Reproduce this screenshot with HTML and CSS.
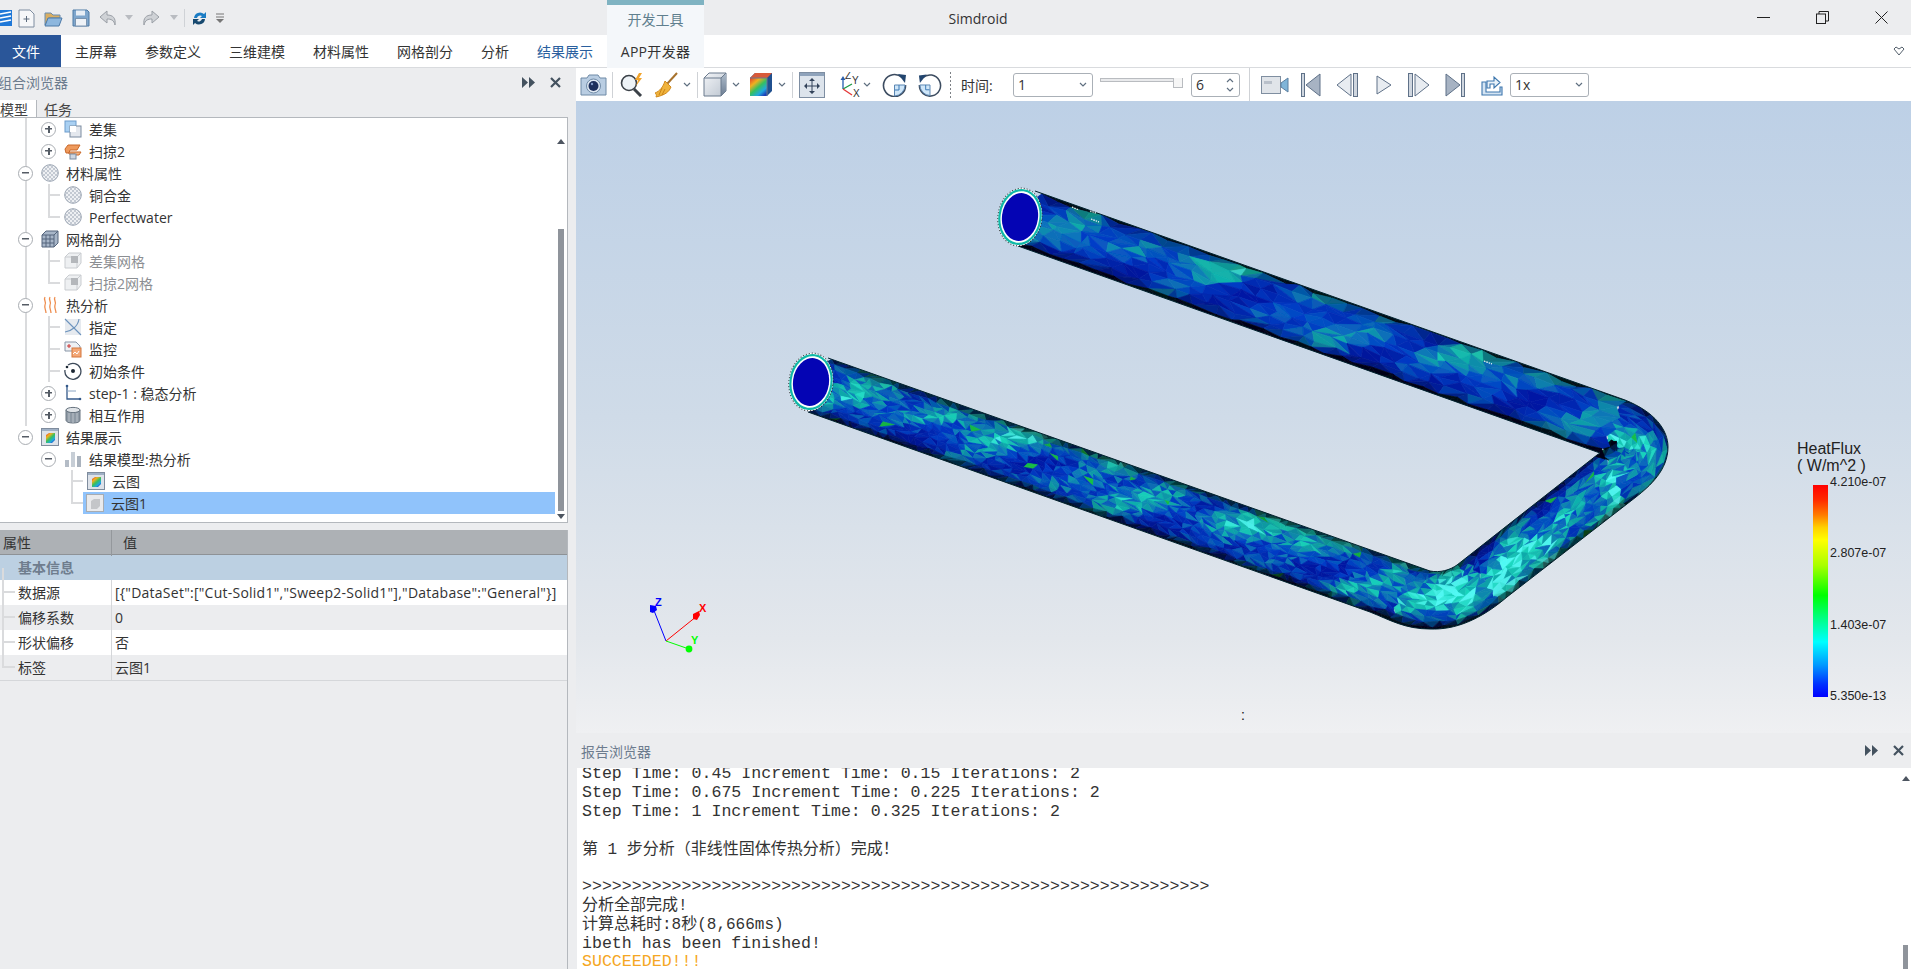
FILE: index.html
```html
<!DOCTYPE html>
<html lang="zh">
<head>
<meta charset="utf-8">
<title>Simdroid</title>
<link rel="stylesheet" href="styles.css">
</head>
<body>
<svg class="defs" width="0" height="0">
  <defs>
    <pattern id="chk" width="4" height="4" patternUnits="userSpaceOnUse"><rect width="4" height="4" fill="#eef0f3"/><rect width="2" height="2" fill="#c3c9d2"/><rect x="2" y="2" width="2" height="2" fill="#c3c9d2"/></pattern>
    <linearGradient id="rainbow" x1="0" y1="0" x2="0.8" y2="1"><stop offset="0" stop-color="#e23a2a"/><stop offset=".3" stop-color="#f0b020"/><stop offset=".55" stop-color="#35c060"/><stop offset=".8" stop-color="#20a8e0"/><stop offset="1" stop-color="#1c3fb8"/></linearGradient>
    <linearGradient id="steel" x1="0" y1="0" x2="1" y2="1"><stop offset="0" stop-color="#f2f4f7"/><stop offset="1" stop-color="#bcc5d0"/></linearGradient>
    <linearGradient id="sideg" x1="0" y1="0" x2="0" y2="1"><stop offset="0" stop-color="#aebccb"/><stop offset="1" stop-color="#6d7e93"/></linearGradient>
    <filter id="soften" x="-2%" y="-2%" width="104%" height="104%"><feGaussianBlur stdDeviation="0.6"/></filter>
    <symbol id="i-mat" viewBox="0 0 18 18"><circle cx="9" cy="9" r="8.3" fill="url(#chk)" stroke="#9aa4b2"/></symbol>
    <symbol id="i-cut" viewBox="0 0 18 18"><rect x="1" y="1" width="11" height="11" fill="#a9d0f2" stroke="#6c9ccc"/><rect x="6" y="6" width="11" height="11" fill="#e4e8ee" stroke="#7b8ba0"/><rect x="6" y="6" width="6" height="6" fill="#fff"/></symbol>
    <symbol id="i-sweep" viewBox="0 0 18 18"><path d="M4 3h12l-3 5h-7l-1 3h-3l-1-4z" fill="#ef9a5c" stroke="#c9692a"/><path d="M5 10h12l-2 3h-4v-1h-6z" fill="#f3b484" stroke="#c9692a"/><rect x="6" y="12" width="6" height="5" fill="#cdd6e2" stroke="#7b8ba0"/></symbol>
    <symbol id="i-mesh" viewBox="0 0 18 18"><path d="M1 5l4-4h12v12l-4 4H1z" fill="#a8b6c8" stroke="#54657c"/><path d="M1 5h12v12M13 5l4-4M5 5v12M9 5v12M1 9h12M1 13h12" fill="none" stroke="#54657c"/></symbol>
    <symbol id="i-gmesh" viewBox="0 0 18 18"><path d="M1 5l4-4h12v10l-4 5H1z" fill="#eef0f2" stroke="#c9ccd0"/><path d="M1 5h12v11M13 5l4-4" fill="none" stroke="#c9ccd0"/><path d="M7 4h7v7H7z" fill="#b4b7bb"/></symbol>
    <symbol id="i-heat" viewBox="0 0 18 18"><path d="M4 1c-2 3 2 5 0 8-1 3 1 5 1 8M9 1c-2 3 2 5 0 8-1 3 1 5 1 8M14 1c-2 3 2 5 0 8-1 3 1 5 1 8" fill="none" stroke="#ee8d4e" stroke-width="1.3"/></symbol>
    <symbol id="i-assign" viewBox="0 0 18 18"><rect x="1" y="1" width="16" height="16" fill="#e6eaef"/><path d="M1 1l16 16M1 14C8 13 14 8 15 1" fill="none" stroke="#6c93bd" stroke-width="1.1"/></symbol>
    <symbol id="i-monitor" viewBox="0 0 18 18"><path d="M1 2h11l4 4v5H1z" fill="#eef1f4" stroke="#8895a7"/><rect x="8" y="8" width="9" height="9" fill="#f3a878" stroke="#d4773c"/><path d="M9 14l2-2 2 2 2-3" fill="none" stroke="#fff"/><path d="M5 4v4M3 6h4" stroke="#c33" /></symbol>
    <symbol id="i-init" viewBox="0 0 18 18"><path d="M4 3a8 8 0 1 1-3 5" fill="none" stroke="#3d4a5a" stroke-width="1.3"/><circle cx="9" cy="9" r="2" fill="#1c2733"/><circle cx="3" cy="5" r="1.3" fill="#1c2733"/></symbol>
    <symbol id="i-step" viewBox="0 0 18 18"><path d="M3 2v13h14" fill="none" stroke="#34598a" stroke-width="1.3"/><path d="M3 7h9" stroke="#8aa4c2" stroke-width="1"/><circle cx="3" cy="2" r="1.3" fill="#34598a"/><circle cx="16" cy="15" r="1.3" fill="#34598a"/></symbol>
    <symbol id="i-cyl" viewBox="0 0 18 18"><path d="M2 4v10c0 2 3 3 7 3s7-1 7-3V4z" fill="#8f9aa5" stroke="#687480"/><ellipse cx="9" cy="4" rx="7" ry="2.6" fill="#dfe3e7" stroke="#687480"/><path d="M5 7v9M9 7v10M13 7v9" stroke="#bcc3cb"/></symbol>
    <symbol id="i-win" viewBox="0 0 18 18"><rect x=".5" y=".5" width="17" height="17" fill="#dde2e9" stroke="#7f8c9d"/><rect x="1" y="1" width="16" height="2" fill="#9fb0c5"/><path d="M5 7l3-2h6v7l-3 3H5z" fill="url(#rainbow)"/></symbol>
    <symbol id="i-gwin" viewBox="0 0 18 18"><rect x=".5" y=".5" width="17" height="17" fill="#e9eaec" stroke="#a8acb1"/><path d="M5 7l3-2h6v7l-3 3H5z" fill="#c4c6c9"/></symbol>
    <symbol id="i-bars" viewBox="0 0 18 18"><rect x="1" y="10" width="4" height="7" fill="#b4bcc6"/><rect x="7" y="2" width="4" height="15" fill="#c7ced6"/><rect x="13" y="6" width="4" height="11" fill="#aab3be"/></symbol>
    <symbol id="i-chev" viewBox="0 0 8 5"><path d="M1 1l3 3 3-3" fill="none" stroke="#5f6f80" stroke-width="1.2"/></symbol>
    <symbol id="i-rot" viewBox="0 0 25 25"><path d="M20 5.5A11 11 0 1 0 23.5 13" fill="none" stroke="#3c4c60" stroke-width="1.6"/><path d="M16 2l8 1-1 8z" fill="#22456e"/><path d="M12.5 13h10.5a11 11 0 0 1-10.5 11z" fill="#cfe6f8" stroke="#5a86b3"/><path d="M17 13v5h-4" fill="none" stroke="#3a78b5"/></symbol>
  </defs>
</svg>

<div class="app">
  <header class="titlebar">
    <div class="qa">
      <svg class="qa-logo" width="12" height="16" viewBox="0 0 12 16"><rect width="12" height="16" fill="#1f78d8"/><path d="M0 4l11-2M0 8l11-2M0 12l11-2" stroke="#fff" stroke-width="1.6"/></svg>
      <svg class="q6" width="17" height="19" viewBox="0 0 17 19"><path d="M1 1h11l4 4v13H1z" fill="#f6f7f9" stroke="#7f8da0"/><path d="M8.5 7v6M5.5 10h6" stroke="#5c6b7d"/></svg>
      <svg class="q9" width="19" height="17" viewBox="0 0 19 17"><path d="M1 3h6l2 2h7v3H5L1 15z" fill="#d9ae62" stroke="#6b8cae"/><path d="M4 8h14l-3 8H1z" fill="#8db7de" stroke="#4d7aa8"/></svg>
      <svg class="q9" width="18" height="18" viewBox="0 0 18 18"><path d="M1 1h14l2 2v14H1z" fill="#7fa6cc" stroke="#4f7aa5"/><rect x="4" y="1.5" width="9" height="5" fill="#e8eef5"/><rect x="3.5" y="9.5" width="11" height="7.5" fill="#eef2f7" stroke="#7a94b0"/></svg>
      <svg class="q8" width="20" height="18" viewBox="0 0 20 18"><path d="M9 2L2 8l7 6v-4c4 0 7 1 8 6 1-7-2-10-8-10z" fill="#cfd2d6" stroke="#9a9fa6"/></svg>
      <svg class="q6" width="10" height="6" viewBox="0 0 10 6"><path d="M1 0h8L5 5z" fill="#b9bcc1"/></svg>
      <svg class="q7" width="20" height="18" viewBox="0 0 20 18"><path d="M11 2l7 6-7 6v-4c-4 0-7 1-8 6-1-7 2-10 8-10z" fill="#cfd2d6" stroke="#9a9fa6"/></svg>
      <svg class="q8" width="10" height="6" viewBox="0 0 10 6"><path d="M1 0h8L5 5z" fill="#b9bcc1"/></svg>
      <i class="qa-sep"></i>
      <svg class="q7" width="15" height="19" viewBox="0 0 15 19"><path d="M2 9a6 6 0 0 1 10-4l2-2v6H8l2-2a3.5 3.5 0 0 0-5 2z" fill="#1b7cc4"/><path d="M13 10a6 6 0 0 1-10 4l-2 2v-6h6l-2 2a3.5 3.5 0 0 0 5-2z" fill="#17496f"/></svg>
      <svg class="q9" width="8" height="11" viewBox="0 0 8 11"><path d="M0 1h8M0 4h8" stroke="#777" stroke-width="1.2"/><path d="M0 6h8L4 10z" fill="#777"/></svg>
    </div>
    <div class="devtab">开发工具</div>
    <div class="apptitle">Simdroid</div>
    <div class="winbtns">
      <button class="winbtn"><svg width="13" height="13" viewBox="0 0 13 13"><path d="M0 6.5h13" stroke="#222" stroke-width="1"/></svg></button>
      <button class="winbtn"><svg width="13" height="13" viewBox="0 0 13 13"><rect x=".5" y="3" width="9" height="9.5" fill="none" stroke="#222"/><path d="M3 3V.5h9.5V10H10" fill="none" stroke="#222"/></svg></button>
      <button class="winbtn"><svg width="13" height="13" viewBox="0 0 13 13"><path d="M.5.5l12 12M12.5.5l-12 12" stroke="#222"/></svg></button>
    </div>
  </header>

  <nav class="ribbon">
    <div class="rtab file">文件</div>
    <div class="rtab">主屏幕</div>
    <div class="rtab">参数定义</div>
    <div class="rtab">三维建模</div>
    <div class="rtab">材料属性</div>
    <div class="rtab">网格剖分</div>
    <div class="rtab">分析</div>
    <div class="rtab active">结果展示</div>
    <div class="rtab app">APP开发器</div>
    <svg class="ribbon-fold" width="12" height="10" viewBox="0 0 12 10"><path d="M3 1L1 3l5 6 5-6-2-2-3 2z" fill="#fff" stroke="#55606c"/></svg>
  </nav>

  <div class="main">
    <aside class="left">
      <div class="panelhead tophead">
        <span class="panelname clip">组合浏览器</span>
        <span class="panelbtns">
          <svg width="13" height="11" viewBox="0 0 13 11"><path d="M0 0l6 5.5L0 11zM7 0l6 5.5L7 11z" fill="#44525f"/></svg>
          <svg class="closex" width="11" height="11" viewBox="0 0 11 11"><path d="M1 1l9 9M10 1l-9 9" stroke="#44525f" stroke-width="2.2"/></svg>
        </span>
      </div>
      <div class="ltabs"><span class="ltab on">模型</span><span class="ltab">任务</span></div>
      <div class="treebox">
        <div class="tree">
          <div class="row"><i class="cell v"></i><i class="cell"><b class="exp plus"></b></i><svg class="ic"><use href="#i-cut"/></svg><span class="lb">差集</span></div>
          <div class="row"><i class="cell v"></i><i class="cell"><b class="exp plus"></b></i><svg class="ic"><use href="#i-sweep"/></svg><span class="lb">扫掠2</span></div>
          <div class="row"><i class="cell v"><b class="exp minus"></b></i><svg class="ic"><use href="#i-mat"/></svg><span class="lb">材料属性</span></div>
          <div class="row"><i class="cell v"></i><i class="cell tee"></i><svg class="ic"><use href="#i-mat"/></svg><span class="lb">铜合金</span></div>
          <div class="row"><i class="cell v"></i><i class="cell end"></i><svg class="ic"><use href="#i-mat"/></svg><span class="lb">Perfectwater</span></div>
          <div class="row"><i class="cell v"><b class="exp minus"></b></i><svg class="ic"><use href="#i-mesh"/></svg><span class="lb">网格剖分</span></div>
          <div class="row"><i class="cell v"></i><i class="cell tee"></i><svg class="ic"><use href="#i-gmesh"/></svg><span class="lb dim">差集网格</span></div>
          <div class="row"><i class="cell v"></i><i class="cell end"></i><svg class="ic"><use href="#i-gmesh"/></svg><span class="lb dim">扫掠2网格</span></div>
          <div class="row"><i class="cell v"><b class="exp minus"></b></i><svg class="ic"><use href="#i-heat"/></svg><span class="lb">热分析</span></div>
          <div class="row"><i class="cell v"></i><i class="cell tee"></i><svg class="ic"><use href="#i-assign"/></svg><span class="lb">指定</span></div>
          <div class="row"><i class="cell v"></i><i class="cell tee"></i><svg class="ic"><use href="#i-monitor"/></svg><span class="lb">监控</span></div>
          <div class="row"><i class="cell v"></i><i class="cell tee"></i><svg class="ic"><use href="#i-init"/></svg><span class="lb">初始条件</span></div>
          <div class="row"><i class="cell v"></i><i class="cell"><b class="exp plus"></b></i><svg class="ic"><use href="#i-step"/></svg><span class="lb">step-1 : 稳态分析</span></div>
          <div class="row"><i class="cell v"></i><i class="cell"><b class="exp plus"></b></i><svg class="ic"><use href="#i-cyl"/></svg><span class="lb">相互作用</span></div>
          <div class="row"><i class="cell"><b class="exp minus"></b></i><svg class="ic"><use href="#i-win"/></svg><span class="lb">结果展示</span></div>
          <div class="row"><i class="cell"></i><i class="cell"><b class="exp minus"></b></i><svg class="ic"><use href="#i-bars"/></svg><span class="lb">结果模型:热分析</span></div>
          <div class="row"><i class="cell"></i><i class="cell"></i><i class="cell tee"></i><svg class="ic"><use href="#i-win"/></svg><span class="lb">云图</span></div>
          <div class="row"><i class="cell"></i><i class="cell"></i><i class="cell end"></i><span class="sel"><svg class="ic"><use href="#i-gwin"/></svg><span class="lb">云图1</span></span></div>
        </div>
        <div class="treescroll">
          <svg class="sarrow" width="8" height="5" viewBox="0 0 8 5"><path d="M4 0l4 5H0z" fill="#4d5560"/></svg>
          <div class="sthumb"></div>
          <svg width="8" height="5" viewBox="0 0 8 5"><path d="M4 5L0 0h8z" fill="#4d5560"/></svg>
        </div>
      </div>
      <section class="props">
        <div class="phead"><span class="pk">属性</span><span class="pv">值</span></div>
        <div class="pgroup">基本信息</div>
        <div class="prow"><span class="pk">数据源</span><span class="pv wide">[{"DataSet":["Cut-Solid1","Sweep2-Solid1"],"Database":"General"}]</span></div>
        <div class="prow alt"><span class="pk">偏移系数</span><span class="pv">0</span></div>
        <div class="prow"><span class="pk">形状偏移</span><span class="pv">否</span></div>
        <div class="prow alt last"><span class="pk">标签</span><span class="pv">云图1</span></div>
      </section>
    </aside>

    <div class="right">
      <div class="toolbar">
        <svg class="tool" width="27" height="23" viewBox="0 0 27 23"><path d="M1 5h6l2-3h9l2 3h6v17H1z" fill="#b9cde2" stroke="#6f8aa6"/><circle cx="13.5" cy="13" r="7" fill="#dfe8f2" stroke="#6f8aa6"/><circle cx="13.5" cy="13" r="5" fill="#1d2f5c"/><circle cx="12" cy="11" r="1.2" fill="#7f97c4"/></svg>
        <i class="tsep m5"></i>
        <svg class="tool m6" width="27" height="25" viewBox="0 0 27 25"><circle cx="10" cy="11" r="7.5" fill="#eef3f7" stroke="#3b4148" stroke-width="1.6"/><path d="M15 17l7 7" stroke="#3b4148" stroke-width="3"/><path d="M20 1l-4 7h3l-2 6 6-8h-3l3-5z" fill="#f2a42c"/></svg>
        <svg class="tool m8" width="24" height="26" viewBox="0 0 24 26"><path d="M23 1L13 12" stroke="#a7722d" stroke-width="2"/><path d="M11 9l6 6c-2 5-6 8-15 10 1-2 0-3-1-4 5-2 8-6 10-12z" fill="#f0b33c" stroke="#d18a1d"/><path d="M8 16l-3 7M11 17l-3 6" stroke="#c98417"/></svg>
        <svg class="chev m5" width="8" height="5"><use href="#i-chev"/></svg>
        <i class="tsep m6"></i>
        <svg class="tool m5" width="24" height="25" viewBox="0 0 24 25"><path d="M1 6l5-5h17v18l-5 5H1z" fill="url(#steel)" stroke="#6b7a8d"/><path d="M18 6v18l5-5V1z" fill="url(#sideg)"/><path d="M1 6h17v18M18 6l5-5" fill="none" stroke="#6b7a8d"/></svg>
        <svg class="chev m5" width="8" height="5"><use href="#i-chev"/></svg>
        <svg class="tool m9" width="24" height="25" viewBox="0 0 24 25"><path d="M1 6l5-5h17v18l-5 5H1z" fill="#20508f"/><rect x="1" y="6" width="17" height="18" fill="url(#rainbow)"/><path d="M1 6l5-5h17l-5 5z" fill="#d85a3a"/><path d="M1 6h17v18" fill="none" stroke="#6b7a8d"/></svg>
        <svg class="chev m5" width="8" height="5"><use href="#i-chev"/></svg>
        <i class="tsep m6"></i>
        <svg class="tool m6" width="26" height="26" viewBox="0 0 26 26"><rect x=".5" y=".5" width="25" height="25" fill="#dde4ec" stroke="#7e8ea2"/><rect x="1" y="1" width="24" height="3" fill="#8fa3bb"/><path d="M13 7v14M6 14h14" stroke="#33435a"/><path d="M13 6l3 3h-6zM13 22l-3-3h6zM5 14l3-3v6zM21 14l-3 3v-6z" fill="#33435a"/></svg>
        <svg class="tool m13" width="24" height="26" viewBox="0 0 24 26"><path d="M5 17V6" stroke="#3467b5" stroke-width="1.4"/><path d="M5 4l-2.5 4h5z" fill="#2c5ea8"/><path d="M5 17l9-5" stroke="#1f9a45" stroke-width="1.4"/><path d="M5 17l9 6" stroke="#e43838" stroke-width="1.4"/><text class="axt" x="7" y="7">Z</text><text class="axt" x="14" y="12">Y</text><text class="axt" x="15" y="25">X</text></svg>
        <svg class="chev m1" width="8" height="5"><use href="#i-chev"/></svg>
        <svg class="tool m11" width="25" height="25"><use href="#i-rot"/></svg>
        <svg class="tool m11 flip" width="24" height="25"><use href="#i-rot"/></svg>
        <i class="tdash m8"></i>
        <span class="tlabel m10">时间:</span>
        <div class="combo m20 w80"><span>1</span><svg class="chev" width="8" height="5"><use href="#i-chev"/></svg></div>
        <div class="slider m7"><i class="track"></i><i class="handle"></i></div>
        <div class="combo m8 w49"><span>6</span><span class="spin"><svg width="8" height="5" class="up"><use href="#i-chev"/></svg><svg width="8" height="5"><use href="#i-chev"/></svg></span></div>
        <i class="tsep tall m9"></i>
        <svg class="tool m11" width="28" height="18" viewBox="0 0 28 18"><rect x=".5" y=".5" width="19" height="17" fill="#e0e4e9" stroke="#7f8ea0"/><rect x="3" y="5" width="8" height="3" fill="#b9c0ca"/><path d="M20 7l7-5v14l-7-5z" fill="#7fb4d8" stroke="#5b7ea0"/></svg>
        <svg class="tool m12" width="20" height="24" viewBox="0 0 20 24"><rect x=".5" y=".5" width="3" height="23" fill="#cfd6df" stroke="#5f7188"/><path d="M19 1v22L5 12z" fill="#a7b3c3" stroke="#5f7188"/></svg>
        <svg class="tool m15" width="22" height="24" viewBox="0 0 22 24"><path d="M15 1v22L1 12z" fill="#e8ecf1" stroke="#5f7188"/><rect x="17.5" y=".5" width="4" height="23" fill="#cfd6df" stroke="#5f7188"/></svg>
        <svg class="tool m18" width="16" height="20" viewBox="0 0 16 20"><path d="M1 1v18l14-9z" fill="#e8ecf1" stroke="#5f7188"/></svg>
        <svg class="tool m16" width="22" height="24" viewBox="0 0 22 24"><rect x=".5" y=".5" width="4" height="23" fill="#cfd6df" stroke="#5f7188"/><path d="M7 1v22l14-11z" fill="#e8ecf1" stroke="#5f7188"/></svg>
        <svg class="tool m15" width="20" height="24" viewBox="0 0 20 24"><path d="M1 1v22l14-11z" fill="#a7b3c3" stroke="#5f7188"/><rect x="16.5" y=".5" width="3" height="23" fill="#cfd6df" stroke="#5f7188"/></svg>
        <svg class="tool m16" width="22" height="24" viewBox="0 0 22 24"><path d="M1 9h4v10h14v-5h2v8H1z" fill="#d4e4f3" stroke="#3c76ad" stroke-width="1.1"/><path d="M6 15V8h7V4l6 5.5-6 5.5v-4H9v4z" fill="#e8f1f9" stroke="#3c76ad" stroke-width="1.1"/></svg>
        <div class="combo m7 w79"><span>1x</span><svg class="chev" width="8" height="5"><use href="#i-chev"/></svg></div>
      </div>

      <div class="viewport">
        <svg class="scene" viewBox="576 101 1335 632" width="1335" height="632">
          <defs>
            <clipPath id="pipeclip"><path id="pipeoutline" d="M1035 191L1625 400C1655 412 1668 430 1668 447C1668 470 1650 486 1636 497L1507 597C1480 620 1455 630 1430 629C1405 629 1390 620 1370 612L808 412L800 382L828 358L1430 571C1440 573 1450 570 1457 565L1597 455L1600 453L1018 246L1010 218z"/></clipPath>
          </defs>
          <g clip-path="url(#pipeclip)"><g id="pipe-mesh" filter="url(#soften)"></g></g>
          <path class="pipe-edge" d="M1035 191L1625 400C1655 412 1668 430 1668 447C1668 470 1650 486 1636 497L1507 597C1480 620 1455 630 1430 629C1405 629 1390 620 1370 612L808 412M828 358L1430 571C1440 573 1450 570 1457 565L1597 455L1600 453L1018 246"/>
          <path class="specks" d="M1072 207l7 3M1090 211l6 2M1091 219l8 3M1484 361l8 3"/>
          <g transform="rotate(8 1020 217)">
            <ellipse class="rim" cx="1020" cy="217" rx="22" ry="29"/>
            <ellipse class="ring" cx="1020" cy="217" rx="20.5" ry="27"/>
            <ellipse class="gap" cx="1020" cy="217" rx="18.6" ry="24.6"/>
            <ellipse class="core" cx="1020" cy="217" rx="18" ry="24"/>
          </g>
          <g transform="rotate(8 811 382)">
            <ellipse class="rim" cx="811" cy="382" rx="22" ry="29"/>
            <ellipse class="ring" cx="811" cy="382" rx="20.5" ry="27"/>
            <ellipse class="gap" cx="811" cy="382" rx="18.6" ry="24.6"/>
            <ellipse class="core" cx="811" cy="382" rx="18" ry="24"/>
          </g>
          <path class="ax-z" d="M666 641L653 608"/><path d="M650 605l6 1 1 4-4 3-3-1z" fill="#0000ff"/>
          <path class="ax-x" d="M666 641L697 616"/><path d="M693 614l6-3 1 4-3 5-4-1z" fill="#ff0000"/>
          <path class="ax-y" d="M666 641L689 649"/><circle cx="689" cy="649" r="3.4" fill="#00ff00"/>
          <text class="lab-z" x="655" y="606">Z</text>
          <text class="lab-x" x="699" y="612">X</text>
          <text class="lab-y" x="691" y="644">Y</text>
          <text class="colon" x="1241" y="720">:</text>
        </svg>
        <div class="legend">
          <div class="legend-title">HeatFlux<br>( W/m^2 )</div>
          <div class="legend-body">
            <div class="legend-bar"></div>
            <div class="legend-labels"><span>4.210e-07</span><span>2.807e-07</span><span>1.403e-07</span><span>5.350e-13</span></div>
          </div>
        </div>
      </div>

      <div class="panelhead report">
        <span class="panelname">报告浏览器</span>
        <span class="panelbtns">
          <svg width="13" height="11" viewBox="0 0 13 11"><path d="M0 0l6 5.5L0 11zM7 0l6 5.5L7 11z" fill="#44525f"/></svg>
          <svg class="closex" width="11" height="11" viewBox="0 0 11 11"><path d="M1 1l9 9M10 1l-9 9" stroke="#44525f" stroke-width="2.2"/></svg>
        </span>
      </div>
      <div class="logbox">
        <div class="log">
          <div>Step Time: 0.45 Increment Time: 0.15 Iterations: 2</div>
          <div>Step Time: 0.675 Increment Time: 0.225 Iterations: 2</div>
          <div>Step Time: 1 Increment Time: 0.325 Iterations: 2</div>
          <div>&nbsp;</div>
          <div class="cjk">第 1 步分析（非线性固体传热分析）完成！</div>
          <div>&nbsp;</div>
          <div>&gt;&gt;&gt;&gt;&gt;&gt;&gt;&gt;&gt;&gt;&gt;&gt;&gt;&gt;&gt;&gt;&gt;&gt;&gt;&gt;&gt;&gt;&gt;&gt;&gt;&gt;&gt;&gt;&gt;&gt;&gt;&gt;&gt;&gt;&gt;&gt;&gt;&gt;&gt;&gt;&gt;&gt;&gt;&gt;&gt;&gt;&gt;&gt;&gt;&gt;&gt;&gt;&gt;&gt;&gt;&gt;&gt;&gt;&gt;&gt;&gt;&gt;&gt;</div>
          <div class="cjk">分析全部完成!</div>
          <div class="cjk">计算总耗时:8秒(8,666ms)</div>
          <div>ibeth has been finished!</div>
          <div class="ok">SUCCEEDED!!!</div>
        </div>
        <div class="logscroll">
          <svg width="8" height="5" viewBox="0 0 8 5"><path d="M4 0l4 5H0z" fill="#4d5560"/></svg>
          <div class="logthumb"></div>
        </div>
      </div>
    </div>
  </div>
</div>
<script src="pipe.js"></script>
</body>
</html>
```

FILE: styles.css
```css
* { box-sizing: border-box; }
html, body { margin: 0; padding: 0; height: 100%; overflow: hidden; }
body { font-family: "Open Sans", "Noto Sans CJK SC", sans-serif; font-size: 14px; color: #333; background: #ecedef; }
.defs { position: absolute; }
.app { width: 1911px; height: 969px; display: flex; flex-direction: column; overflow: hidden; }

/* title bar */
.titlebar { height: 35px; display: flex; align-items: stretch; background: #ecedef; flex: none; }
.qa { width: 607px; display: flex; align-items: center; flex: none; padding-top: 1px; }
.q6 { margin-left: 6px; } .q7 { margin-left: 7px; } .q8 { margin-left: 8px; } .q9 { margin-left: 9px; }
.qa-sep { width: 1px; height: 18px; background: #cfd2d6; margin-left: 5px; }
.devtab { width: 97px; flex: none; background: #f4f7fa; border-top: 5px solid #7fb3c2; color: #5f7f8e; text-align: center; line-height: 30px; }
.apptitle { width: 548px; flex: none; text-align: center; line-height: 38px; font-size: 14px; color: #333; }
.winbtns { margin-left: auto; display: flex; }
.winbtn { width: 59px; height: 35px; border: 0; background: none; padding: 0; display: flex; align-items: center; justify-content: center; }

/* ribbon */
.ribbon { height: 33px; background: #fff; border-bottom: 1px solid #d9dbde; display: flex; align-items: stretch; flex: none; }
.rtab { padding: 0 14px; line-height: 34px; color: #333; }
.rtab.file { width: 61px; padding: 0 9px 0 0; text-align: center; background: #2a5699; color: #fff; }
.rtab.active { color: #2a5f9e; }
.rtab.app { width: 97px; padding: 0; text-align: center; background: #f4f7fa; letter-spacing: .3px; }
.ribbon-fold { margin: 11px 6px 0 auto; }

.main { flex: 1; display: flex; min-height: 0; }

/* left column */
.left { width: 576px; flex: none; display: flex; flex-direction: column; background: #ecedef; padding-right: 8px; }
.panelhead { height: 32px; flex: none; display: flex; align-items: center; justify-content: space-between; }
.panelhead.tophead { align-items: flex-start; padding-top: 4px; }
.panelhead.tophead .panelbtns { margin-top: 5px; }
.panelname { color: #6d7c8e; font-size: 14px; }
.panelname.clip { margin-left: -2px; }
.panelbtns { display: flex; align-items: center; margin-right: 7px; }
.closex { margin-left: 15px; }
.ltabs { height: 17px; display: flex; flex: none; overflow: hidden; line-height: 20px; }
.ltab { display: block; color: #444; }
.ltab.on { width: 37px; background: #fff; border-right: 1px solid #b4b8bd; }
.ltab:last-child { margin-left: 7px; }

.treebox { height: 406px; flex: none; display: flex; background: #fff; border-top: 1px solid #b4b8bd; border-right: 1px solid #b4b8bd; border-bottom: 1px solid #b4b8bd; }
.tree { flex: 1; min-width: 0; }
.row { height: 22px; display: flex; align-items: center; padding-left: 14px; }
.cell { width: 23px; height: 22px; flex: none; display: flex; align-items: center; justify-content: center; }
.cell.v { background: linear-gradient(#dadbdd, #dadbdd) center / 2px 100% no-repeat; }
.cell.tee { background: linear-gradient(#dadbdd, #dadbdd) center / 2px 100% no-repeat, linear-gradient(#dadbdd, #dadbdd) right center / 11px 2px no-repeat; }
.cell.end { background: linear-gradient(#dadbdd, #dadbdd) center top / 2px 12px no-repeat, linear-gradient(#dadbdd, #dadbdd) right center / 11px 2px no-repeat; }
.exp { display: block; width: 15px; height: 15px; border: 1px solid #a9adb2; border-radius: 50%; background: #fff linear-gradient(#555c65, #555c65) center / 7px 1.5px no-repeat; }
.exp.plus { position: relative; }
.exp.plus::after { content: ""; position: absolute; left: 6px; top: 3px; width: 1.5px; height: 7px; background: #555c65; }
.ic { width: 18px; height: 18px; margin-left: 4px; flex: none; }
.lb { margin-left: 7px; line-height: 24px; height: 22px; white-space: nowrap; color: #333; }
.lb.dim { color: #8b8e92; }
.sel { flex: 1; height: 22px; display: flex; align-items: center; background: #90c3fb; }
.sel .ic { margin-left: 3px; }
.treescroll { width: 12px; flex: none; display: flex; flex-direction: column; align-items: center; padding-top: 21px; }
.sthumb { width: 6px; height: 282px; margin: 85px 0 3px; background: #8f949b; }

/* properties */
.props { flex: 1; margin-top: 7px; border-right: 1px solid #b4b8bd; }
.phead { height: 25px; display: grid; grid-template-columns: 112px 1fr; background: #adb1b5; border-bottom: 1px solid #8e9296; line-height: 26px; }
.phead .pk { padding-left: 3px; border-right: 1px solid #94989c; }
.phead .pv { padding-left: 11px; }
.pgroup { height: 25px; line-height: 26px; padding-left: 18px; background: #bcd0e2; color: #6f7d8e; font-weight: 600; }
.prow { height: 25px; display: grid; grid-template-columns: 112px 1fr; background: #fff; line-height: 25px; position: relative; }
.prow::before { content: ""; position: absolute; left: 2px; top: -12px; bottom: 12px; width: 11px; border-left: 2px solid #dadbdd; border-bottom: 2px solid #dadbdd; }
.prow.alt { background: #ecedef; }
.prow .pk { padding-left: 18px; border-right: 1px solid #d5d7da; border-bottom: 1px solid #d5d7da; }
.prow .pv { padding-left: 3px; border-bottom: 1px solid #d5d7da; white-space: nowrap; }
.prow .pv.wide { letter-spacing: .25px; }

/* right column */
.right { flex: 1; min-width: 0; display: flex; flex-direction: column; background: #ecedef; }
.toolbar { height: 33px; flex: none; background: #fff; display: flex; align-items: center; padding-left: 4px; white-space: nowrap; }
.tool, .chev { flex: none; display: block; }
.flip { transform: scaleX(-1); }
.axt { font: 10px "Liberation Sans", sans-serif; fill: #333; }
.m1 { margin-left: 1px; } .m5 { margin-left: 5px; } .m6 { margin-left: 6px; } .m7 { margin-left: 7px; } .m8 { margin-left: 8px; } .m9 { margin-left: 9px; }
.m10 { margin-left: 10px; } .m11 { margin-left: 11px; } .m12 { margin-left: 12px; } .m13 { margin-left: 13px; } .m15 { margin-left: 15px; } .m16 { margin-left: 16px; } .m18 { margin-left: 18px; } .m20 { margin-left: 20px; }
.tsep { width: 1px; height: 26px; background: #cfd2d6; flex: none; }
.tsep.tall { height: 33px; }
.tdash { width: 1px; height: 26px; flex: none; background: repeating-linear-gradient(#7d8186 0 2px, transparent 2px 4px); }
.tlabel { width: 32px; flex: none; }
.combo { height: 24px; flex: none; display: flex; align-items: center; justify-content: space-between; border: 1px solid #aab0b7; border-radius: 3px; padding: 0 5px 0 4px; background: #fff; }
.w80 { width: 80px; } .w49 { width: 49px; } .w79 { width: 79px; }
.spin { display: flex; flex-direction: column; gap: 4px; }
.spin .up { transform: scaleY(-1); }
.slider { width: 83px; height: 10px; flex: none; display: flex; align-self: flex-start; margin-top: 10px; }
.track { width: 75px; height: 4px; background: #e9eaec; border: 1px solid #b9bcc0; }
.handle { width: 10px; height: 10px; margin-left: -2px; background: #f6f6f6; border: 1px solid #b9bcc0; border-top: 0; }

.viewport { height: 632px; flex: none; position: relative; overflow: hidden; background: linear-gradient(#bdd0e6, #cfdbe8 50%, #e3e7ec 85%, #eff0f2); }
.scene { position: absolute; left: 0; top: 0; display: block; }
.pipe-edge { fill: none; stroke: #01222e; stroke-width: 1; }
.specks { fill: none; stroke: #fff; stroke-width: 1.2; stroke-dasharray: 1.5 1; }
.rim { fill: #fff; stroke: #222; stroke-width: 1; stroke-dasharray: 1 2; }
.ring { fill: none; stroke: #10b8a8; stroke-width: 2.2; }
.gap { fill: #fff; }
.core { fill: #0404b4; }
.ax-z, .ax-x, .ax-y { fill: none; stroke-width: 1; }
.ax-z { stroke: #0000ff; } .ax-x { stroke: #ff0000; } .ax-y { stroke: #00ff00; }
.lab-z, .lab-x, .lab-y { font: bold 11px "Liberation Sans", sans-serif; }
.lab-z { fill: #0000ff; } .lab-x { fill: #ff0000; } .lab-y { fill: #00ff00; }
.colon { font: 14px "Liberation Sans", sans-serif; fill: #111; }

.legend { position: absolute; left: 1221px; top: 339px; font-family: "Liberation Sans", sans-serif; color: #222; }
.legend-title { font-size: 16px; line-height: 17px; }
.legend-body { display: flex; margin-top: 11px; margin-left: 16px; }
.legend-bar { width: 15px; height: 212px; background: linear-gradient(#ff0000 0, #ff2a00 7%, #ff7a00 14%, #ffd000 20%, #ffff00 26%, #a8ff00 38%, #00ff00 52%, #00ff90 64%, #00ffff 74%, #0098ff 85%, #0030ff 94%, #0000ff 100%); }
.legend-labels { display: flex; flex-direction: column; justify-content: space-between; height: 229px; margin: -10px 0 0 2px; font-size: 12.5px; line-height: 15px; }

.report { height: 35px; padding-left: 5px; background: #ecedef; }
.report .panelbtns { margin-right: 7px; }
.logbox { flex: 1; min-height: 0; display: flex; background: #fff; margin-left: 1px; overflow: hidden; }
.log { flex: 1; padding-left: 5px; margin-top: -2.6px; font-family: "Liberation Mono", "Noto Sans CJK SC", monospace; font-size: 16.6px; line-height: 18.8px; color: #333; }
.log div { height: 18.8px; white-space: pre; }
.log .cjk { font-size: 16px; }
.log .ok { color: #f5a623; }
.logscroll { width: 11px; flex: none; display: flex; flex-direction: column; align-items: center; padding-top: 8px; }
.logthumb { width: 5px; height: 24px; margin-top: auto; background: #8f949b; }
```

FILE: pipe.js
```js
// Builds the faceted result mesh on the pipe from a seeded generator.
(function () {
  var NS = 'http://www.w3.org/2000/svg';
  var host = document.getElementById('pipe-mesh');
  var seed = 20240611;
  function rnd() { seed = (Math.imul(seed, 1664525) + 1013904223) >>> 0; return seed / 4294967296; }

  var stops = [
    [0.00, 3, 25, 165], [0.28, 5, 60, 200], [0.50, 8, 115, 190],
    [0.68, 14, 165, 170], [0.84, 25, 215, 190], [1.00, 80, 250, 245]
  ];
  function ramp(t) {
    t = Math.max(0, Math.min(1, t));
    for (var i = 1; i < stops.length; i++) {
      if (t <= stops[i][0]) {
        var a = stops[i - 1], b = stops[i], k = (t - a[0]) / (b[0] - a[0]);
        return [a[1] + (b[1] - a[1]) * k, a[2] + (b[2] - a[2]) * k, a[3] + (b[3] - a[3]) * k];
      }
    }
    return stops[stops.length - 1].slice(1);
  }
  function bez(p, t) {
    var u = 1 - t;
    return [
      u * u * u * p[0][0] + 3 * u * u * t * p[1][0] + 3 * u * t * t * p[2][0] + t * t * t * p[3][0],
      u * u * u * p[0][1] + 3 * u * u * t * p[1][1] + 3 * u * t * t * p[2][1] + t * t * t * p[3][1]
    ];
  }
  var hot = [[1461, 597, 24, 0.45], [1613, 481, 18, 0.25], [1520, 545, 26, 0.18]];

  var sections = [
    { pts: [[818, 385], [1012, 454], [1206, 522], [1400, 591]], step: 10, rows: 13, mean: 0.42, amp: 0.24, rand: 0.25, tilt: -0.18, spot: 0.01 },
    { pts: [[1400, 591], [1430, 602], [1455, 602], [1482, 581]], step: 9, rows: 13, mean: 0.48, amp: 0.22, rand: 0.26, tilt: -0.1, spot: 0.015 },
    { pts: [[1482, 581], [1527, 546], [1571, 511], [1616, 476]], step: 9, rows: 13, mean: 0.52, amp: 0.24, rand: 0.28, tilt: 0.32, spot: 0.02 },
    { pts: [[1610, 425], [1655, 441], [1650, 462], [1616, 476]], step: 8, rows: 13, mean: 0.46, amp: 0.22, rand: 0.26, tilt: 0.05, spot: 0.02 },
    { pts: [[1026, 218], [1221, 287], [1415, 356], [1610, 425]], step: 17, rows: 9, mean: 0.33, amp: 0.26, rand: 0.15, tilt: -0.15, spot: 0 }
  ];

  var frag = document.createDocumentFragment();
  sections.forEach(function (sec) {
    var total = 0, prev = sec.pts[0], k;
    for (k = 1; k <= 40; k++) {
      var q = bez(sec.pts, k / 40);
      total += Math.hypot(q[0] - prev[0], q[1] - prev[1]);
      prev = q;
    }
    var n = Math.max(3, Math.round(total / sec.step));
    var half = 34, grid = [];
    for (var i = 0; i <= n; i++) {
      var t = i / n, c = bez(sec.pts, t), c2 = bez(sec.pts, Math.min(1, t + 0.01)), c1 = bez(sec.pts, Math.max(0, t - 0.01));
      var dx = c2[0] - c1[0], dy = c2[1] - c1[1], len = Math.hypot(dx, dy) || 1;
      var nx = -dy / len, ny = dx / len, col = [];
      for (var j = 0; j <= sec.rows; j++) {
        var v = -1 + 2 * j / sec.rows;
        var jit = (i === 0 || i === n) ? 0 : 0.35;
        var along = (rnd() - 0.5) * sec.step * jit * 2 + (j % 2 ? sec.step * 0.4 : 0);
        var across = (rnd() - 0.5) * (half * 2 / sec.rows) * 0.5;
        col.push({
          x: c[0] + nx * (v * half + across) + dx / len * along,
          y: c[1] + ny * (v * half + across) + dy / len * along,
          v: v * half / 28,
          s: t * total
        });
      }
      grid.push(col);
    }
    function tri(a, b, d) {
      var mx = (a.x + b.x + d.x) / 3, my = (a.y + b.y + d.y) / 3;
      var mv = (a.v + b.v + d.v) / 3, ms = (a.s + b.s + d.s) / 3;
      var val = sec.mean + sec.tilt * mv
        + sec.amp * Math.sin(ms / 31 + mv * 2.4) * Math.cos(ms / 83 - mv * 1.2)
        + sec.amp * 0.6 * Math.sin(ms / 13 + mv * 3.1)
        + (rnd() - 0.5) * sec.rand * 2;
      hot.forEach(function (h) {
        var dd = ((mx - h[0]) * (mx - h[0]) + (my - h[1]) * (my - h[1])) / (h[2] * h[2]);
        val += h[3] * Math.exp(-dd);
      });
      var rgb = ramp(val);
      if (rnd() < sec.spot) { rgb = [20, 190, 70]; }
      var abs = Math.min(1, Math.abs(mv));
      var shade = 1 - 0.8 * Math.pow(abs, 9) - 0.08 * abs;
      var fill = 'rgb(' + Math.round(rgb[0] * shade) + ',' + Math.round(rgb[1] * shade) + ',' + Math.round(rgb[2] * shade) + ')';
      var el = document.createElementNS(NS, 'polygon');
      el.setAttribute('points', a.x.toFixed(1) + ',' + a.y.toFixed(1) + ' ' + b.x.toFixed(1) + ',' + b.y.toFixed(1) + ' ' + d.x.toFixed(1) + ',' + d.y.toFixed(1));
      el.setAttribute('fill', fill);
      el.setAttribute('stroke', fill);
      el.setAttribute('stroke-width', '0.7');
      frag.appendChild(el);
    }
    for (var a = 0; a < n; a++) {
      for (var b = 0; b < sec.rows; b++) {
        var p = grid[a][b], r = grid[a + 1][b], s = grid[a][b + 1], u = grid[a + 1][b + 1];
        if (rnd() < 0.5) { tri(p, r, s); tri(r, u, s); } else { tri(p, r, u); tri(p, u, s); }
      }
    }
  });
  host.appendChild(frag);
})();
```
